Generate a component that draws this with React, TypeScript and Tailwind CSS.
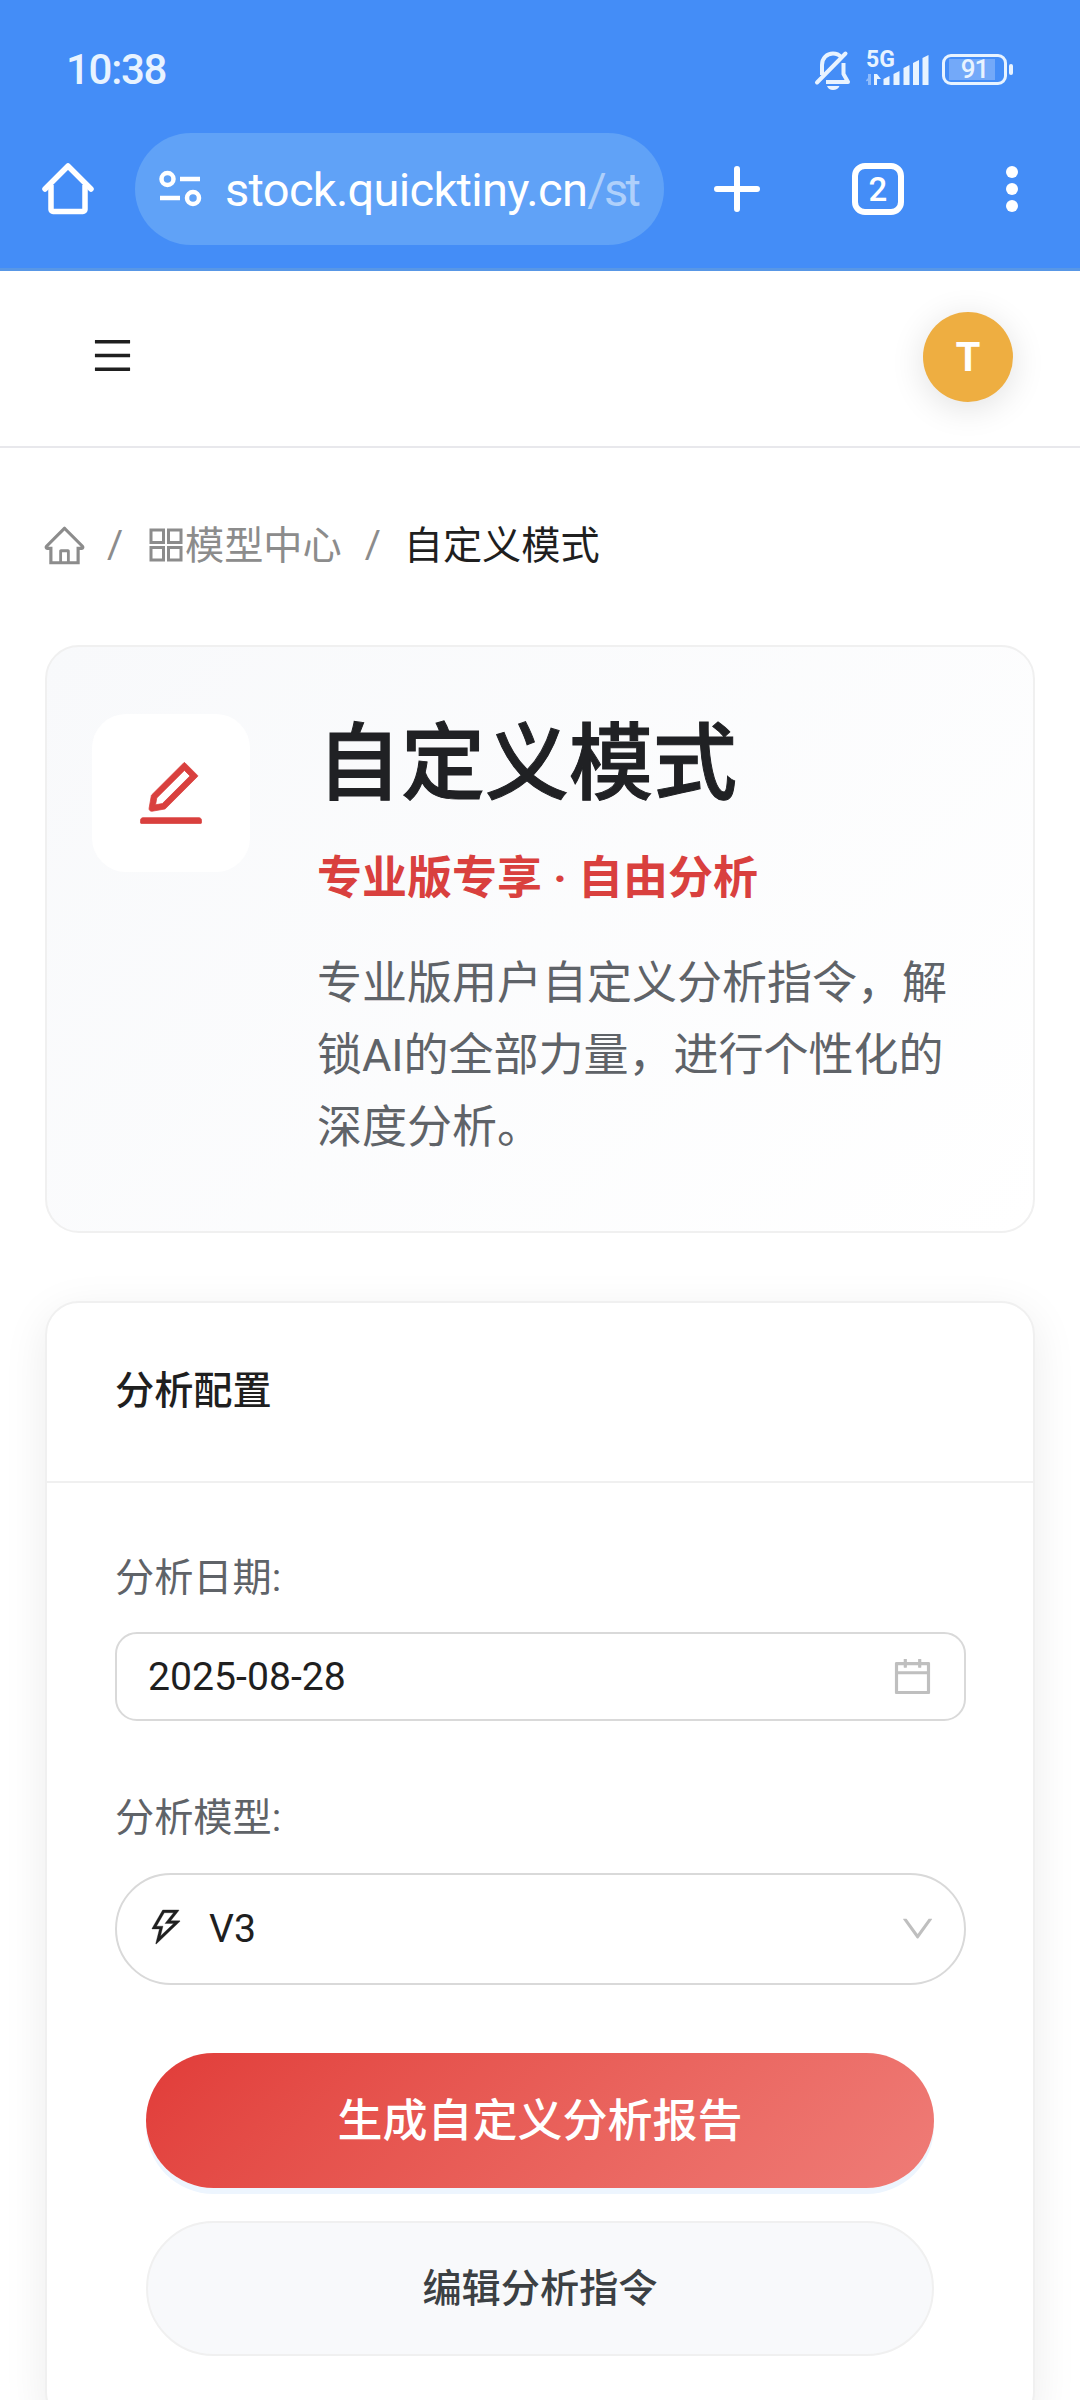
import {
  AiOutlineCalendar,
  AiOutlineDown,
  AiOutlineEdit,
  AiOutlineHome,
  AiOutlineMenu,
  AiOutlineThunderbolt,
} from "react-icons/ai";

const signalBars = [
  { x: 0, h: 9 },
  { x: 10, h: 14 },
  { x: 20, h: 20 },
  { x: 29.5, h: 25 },
  { x: 39, h: 30 },
];

function StatusBar() {
  return (
    <div className="flex h-[133px] items-start justify-between pl-[66px] pr-[67px] text-[#e8f3ff]">
      <span className="mt-[45px] text-[42px] leading-[50px] font-medium tracking-[-1.3px]">
        10:38
      </span>
      <div className="mt-[50px] flex items-start">
        <svg width="38" height="42" viewBox="0 0 38 42" fill="none" stroke="currentColor">
          <path d="M8 25V15C8 8 13 3.500 19 3.500c3 0 6 1 8 3.500" strokeWidth="4" />
          <path d="M3 32.500 31.500 3.500" strokeWidth="4" strokeLinecap="round" />
          <path d="M12 32h22l-4.500-8V13" strokeWidth="4" strokeLinejoin="round" />
          <path d="M13 36h12.500c-1 2.500-3.500 4-6.500 4S14 38.500 13 36Z" fill="currentColor" stroke="none" />
        </svg>
        <div className="relative ml-[14px] h-[36px] w-[66px]">
          <span className="absolute top-[-1px] left-0 text-[23px] leading-[22px] font-bold">
            5G
          </span>
          <svg className="absolute inset-0" width="66" height="36" viewBox="0 0 66 36" fill="currentColor">
            <path d="M5 24v11H2v-4L-1 31.500 2 28v-4Z" opacity=".45" />
            <path d="M8 35V24h3l4 5h-4v6Z" />
            {signalBars.map((bar) => (
              <path
                key={bar.x}
                d={`M${bar.x + 17.5} ${38 - bar.h} l6 -3 V35 h-6 Z`}
              />
            ))}
          </svg>
        </div>
        <div className="mt-[4px] ml-[10px] flex items-center gap-[2px]">
          <div className="relative flex h-[31px] w-[65px] items-center justify-center rounded-[9px] border-3 border-current">
            <div className="absolute top-[2px] left-[4px] h-[21px] w-[46px] bg-white/25" />
            <span className="relative text-[26px] leading-[25px] font-medium tracking-[-1px]">
              91
            </span>
          </div>
          <div className="h-[11px] w-[4px] rounded-full bg-current" />
        </div>
      </div>
    </div>
  );
}

function BrowserBar() {
  return (
    <div className="flex h-[112px] items-center pl-[41px] text-white">
      <svg width="54" height="54" viewBox="0 0 54 54" fill="none" stroke="currentColor" strokeWidth="5.500">
        <path d="M4 27 27 4l23 23" strokeLinecap="round" strokeLinejoin="round" />
        <path d="M10 23v24.500a2 2 0 0 0 2 2h30a2 2 0 0 0 2-2V23" />
      </svg>
      <div className="ml-[40px] flex h-[112px] w-[529px] items-center rounded-full bg-[#60a2f7] pl-[24px]">
        <svg width="43" height="38" viewBox="0 0 43 38" fill="none" stroke="currentColor" strokeWidth="4.500">
          <circle cx="8.500" cy="9" r="6" />
          <path d="M21 9h20M1 28h20" />
          <circle cx="34" cy="28" r="6" />
        </svg>
        <div className="ml-[23px] w-[416px] overflow-hidden pt-[2px] text-[47px] leading-[60px] tracking-[-0.7px] whitespace-nowrap">
          stock.quicktiny.cn<span className="tracking-[-2.6px] text-white/50">/str</span>
        </div>
      </div>
      <svg className="ml-[49px]" width="48" height="48" viewBox="0 0 48 48" stroke="currentColor" strokeWidth="6" strokeLinecap="round">
        <path d="M24 4v40M4 24h40" />
      </svg>
      <div className="ml-[91px] flex h-[52px] w-[52px] items-center justify-center rounded-[13px] border-[6px] border-white text-[33px] leading-none font-medium">
        2
      </div>
      <svg className="ml-[102px]" width="12" height="46" viewBox="0 0 12 46" fill="currentColor">
        <circle cx="6" cy="6" r="6" />
        <circle cx="6" cy="23" r="6" />
        <circle cx="6" cy="40" r="6" />
      </svg>
    </div>
  );
}

function SiteHeader() {
  return (
    <header className="flex h-[177px] items-center justify-between border-b-2 border-[#e8e8ec] pr-[67px] pb-[3px] pl-[90px]">
      <AiOutlineMenu className="mb-[3px] text-[45px] text-[#1f1f1f]" />
      <div className="flex h-[90px] w-[90px] items-center justify-center rounded-full bg-[#eeae41] font-['Inter',sans-serif] text-[39px] font-bold text-white shadow-[0_6px_34px_rgba(0,0,0,0.12)]">
        T
      </div>
    </header>
  );
}

function AppsIcon() {
  return (
    <svg width="34" height="34" viewBox="0 0 34 34" fill="none" stroke="currentColor" strokeWidth="3">
      <rect x="2" y="2" width="12.500" height="12.500" />
      <rect x="19.500" y="2" width="12.500" height="12.500" />
      <rect x="2" y="19.500" width="12.500" height="12.500" />
      <rect x="19.500" y="19.500" width="12.500" height="12.500" />
    </svg>
  );
}

function Breadcrumb() {
  return (
    <nav className="flex h-[62px] items-center text-[39.2px] text-[#8c8c8c]">
      <AiOutlineHome className="ml-[-3px] text-[45px]" />
      <span className="ml-[20px] w-[16px]">/</span>
      <span className="ml-[26px] flex items-center gap-[2px]">
        <AppsIcon />
        <span className="pt-[2px]">模型中心</span>
      </span>
      <span className="ml-[23px] w-[16px]">/</span>
      <span className="ml-[23px] pt-[2px] text-[#1f1f1f]">自定义模式</span>
    </nav>
  );
}

function Hero() {
  return (
    <section className="mt-[69px] flex h-[588px] items-start rounded-[34px] border-2 border-[#f0f0f0] bg-linear-135 from-[#f8f9fb] to-white pt-[67px] pl-[45px]">
      <div className="flex h-[158px] w-[158px] shrink-0 items-center justify-center rounded-[34px] bg-white">
        <AiOutlineEdit className="text-[78px] text-[#d9403e]" stroke="currentColor" strokeWidth={10} />
      </div>
      <div className="ml-[67px] w-[650px]">
        <h1 className="text-[84px] leading-[102px] font-medium text-[#202124] [-webkit-text-stroke:1px_#202124]">
          自定义模式
        </h1>
        <p className="mt-[27px] text-[45px] leading-[72px] font-bold text-[#d9403e]">
          专业版专享 · 自由分析
        </p>
        <p className="mt-[33px] text-[45px] leading-[72px] text-[#5f6368]">
          专业版用户自定义分析指令，解
          <br />
          锁AI的全部力量，进行个性化的
          <br />
          深度分析。
        </p>
      </div>
    </section>
  );
}

function ConfigCard() {
  return (
    <section className="mt-[68px] rounded-[34px] border-2 border-[#f0f0f0] bg-white pb-[68px] text-[39.2px] shadow-[0_11px_45px_rgba(0,0,0,0.08)]">
      <h2 className="flex h-[180px] items-center border-b-2 border-[#f0f0f0] pb-[2px] pl-[68px] font-medium text-[#1f1f1f]">
        分析配置
      </h2>
      <div className="pr-[67px] pl-[68px]">
        <div className="mt-[64px] leading-[62px] text-[#5f6368]">分析日期:</div>
        <div className="mt-[23px] flex h-[89px] items-center justify-between rounded-[22px] border-2 border-[#d9d9d9] pr-[29px] pl-[31px] text-[#1f1f1f]">
          <span className="pt-[2px]">2025-08-28</span>
          <AiOutlineCalendar className="text-[45px] text-[#bfbfbf]" />
        </div>

        <div className="mt-[66px] leading-[62px] text-[#5f6368]">分析模型:</div>
        <div className="mt-[24px] flex h-[112px] items-center rounded-full border-2 border-[#d9d9d9] pr-[27px] pl-[28px] text-[#1f1f1f]">
          <AiOutlineThunderbolt className="mb-[5px] text-[42px]" stroke="currentColor" strokeWidth={8} />
          <span className="ml-[22px]">V3</span>
          <AiOutlineDown className="ml-auto text-[#bfbfbf]" />
        </div>

        <div className="mr-[32px] ml-[31px] mt-[68px] flex flex-col gap-[33px]">
          <button className="h-[135px] rounded-full bg-linear-135 from-[#e13c39] to-[#ef7c77] pt-[2px] text-[45px] font-medium text-white shadow-[0_6px_0_#edf5fe]">
            生成自定义分析报告
          </button>
          <button className="h-[135px] rounded-full border-2 border-[#f0f0f0] bg-[#f8f9fb] pt-[2px] font-medium text-[#3c4043]">
            编辑分析指令
          </button>
        </div>
      </div>
    </section>
  );
}

export default function App() {
  return (
    <div className="h-[2400px] w-[1080px] overflow-hidden bg-white font-['Roboto','Noto_Sans_CJK_SC',sans-serif]">
      <div className="h-[271px] border-b-3 border-[#5897e6] bg-[#448df7]">
        <StatusBar />
        <BrowserBar />
      </div>
      <SiteHeader />
      <main className="px-[45px] pt-[66px]">
        <Breadcrumb />
        <Hero />
        <ConfigCard />
      </main>
    </div>
  );
}
